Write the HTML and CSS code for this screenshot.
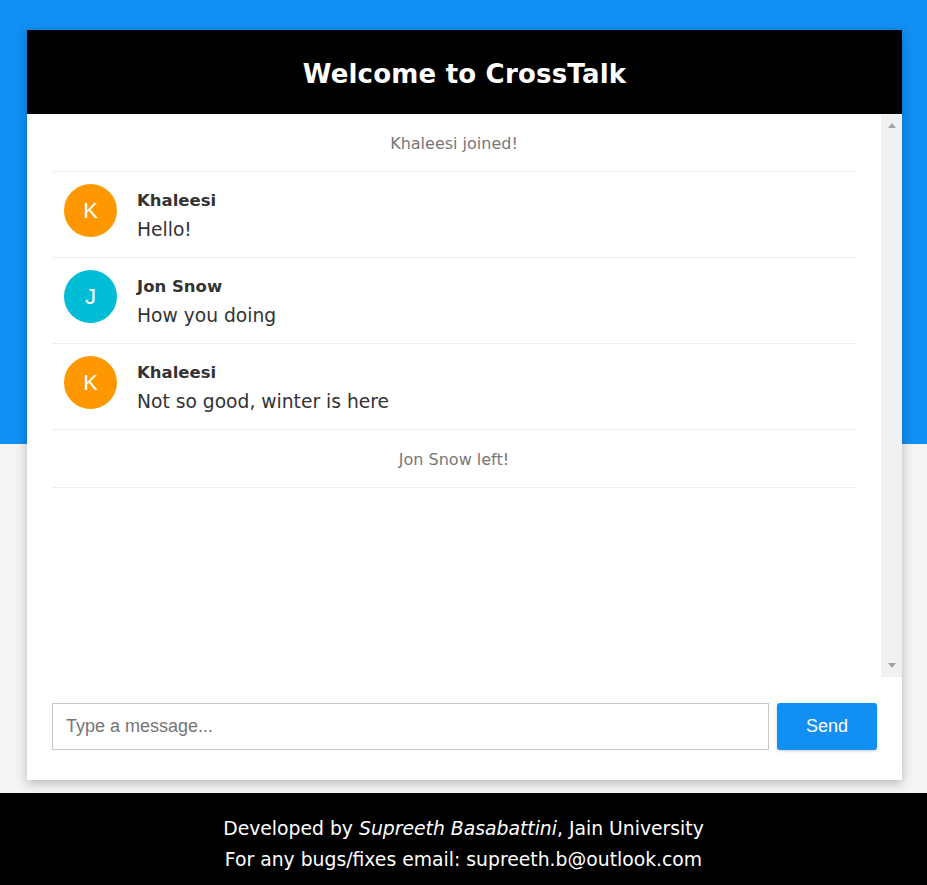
FILE: index.html
```html
<!DOCTYPE html>
<html>
<head>
<meta charset="utf-8">
<title>CrossTalk</title>
<link rel="stylesheet" href="styles.css">
</head>
<body>
<main class="card">
  <header class="card-header"><h1>Welcome to CrossTalk</h1></header>
  <div class="chat">
    <ul class="messages">
      <li class="system">Khaleesi joined!</li>
      <li class="msg">
        <span class="avatar orange">K</span>
        <div class="body"><div class="name">Khaleesi</div><div class="text">Hello!</div></div>
      </li>
      <li class="msg">
        <span class="avatar cyan">J</span>
        <div class="body"><div class="name">Jon Snow</div><div class="text">How you doing</div></div>
      </li>
      <li class="msg">
        <span class="avatar orange">K</span>
        <div class="body"><div class="name">Khaleesi</div><div class="text">Not so good, winter is here</div></div>
      </li>
      <li class="system">Jon Snow left!</li>
    </ul>
    <div class="scrollbar">
      <span class="arrow up"></span>
      <span class="arrow down"></span>
    </div>
  </div>
  <form class="composer">
    <input class="input" type="text" placeholder="Type a message...">
    <button class="send" type="button">Send</button>
  </form>
</main>
<footer class="footer">
  <p>Developed by <em>Supreeth Basabattini</em>, Jain University</p>
  <p>For any bugs/fixes email: supreeth.b@outlook.com</p>
</footer>
</body>
</html>
```
FILE: styles.css
```css
* { box-sizing: border-box; }
html, body { margin: 0; padding: 0; }
body {
  font-family: "Comic Sans MS", "DejaVu Sans", sans-serif;
  background: linear-gradient(#128ff2 0, #128ff2 444px, #f4f4f4 444px);
  min-height: 885px;
  display: flex;
  flex-direction: column;
}
.card {
  margin: 30px 25px 0 27px;
  width: 875px;
  background: #fff;
  box-shadow: 0 3px 10px rgba(0,0,0,0.25);
  display: flex;
  flex-direction: column;
}
.card-header {
  background: #000;
  height: 84px;
  padding-top: 3px;
  display: flex;
  align-items: center;
  justify-content: center;
}
.card-header h1 {
  margin: 0;
  color: #fff;
  font-size: 26px;
  font-weight: bold;
  letter-spacing: 0.2px;
}
.chat {
  height: 563px;
  display: flex;
}
.messages {
  flex: 1;
  list-style: none;
  margin: 0;
  padding: 0 25px;
}
.system {
  height: 58px;
  display: flex;
  align-items: center;
  justify-content: center;
  color: #777;
  font-size: 16px;
  border-bottom: 1px solid #eee;
  padding-top: 2px;
}
.msg {
  height: 86px;
  display: flex;
  align-items: flex-start;
  padding: 12px 0 0 12px;
  border-bottom: 1px solid #eee;
}
.avatar {
  width: 53px;
  height: 53px;
  border-radius: 50%;
  color: #fff;
  display: flex;
  align-items: center;
  justify-content: center;
  font-family: "Liberation Sans", Arial, sans-serif;
  font-size: 22px;
  flex: none;
}
.orange { background: #ff9800; }
.cyan { background: #00bcd4; }
.body { margin-left: 20px; padding-top: 3px; color: #333; }
.name { font-weight: bold; font-size: 16.5px; line-height: 28px; }
.text { font-size: 18.7px; line-height: 30px; }
.scrollbar {
  width: 21px;
  background: #f1f1f1;
  display: flex;
  flex-direction: column;
  justify-content: space-between;
  align-items: center;
  padding: 9px 0 9px;
}
.arrow {
  width: 0;
  height: 0;
  border-left: 4px solid transparent;
  border-right: 4px solid transparent;
}
.arrow.up { border-bottom: 5px solid #a3a3a3; }
.arrow.down { border-top: 5px solid #a3a3a3; }
.composer {
  margin: 0;
  display: flex;
  gap: 8px;
  padding: 26px 25px 30px 25px;
}
.input {
  flex: 1;
  height: 47px;
  border: 1px solid #c7c7c7;
  padding: 0 13px;
  font-family: "Liberation Sans", Arial, sans-serif;
  font-size: 18px;
  color: #333;
  outline: none;
}
.input::placeholder { color: #757575; }
.send {
  width: 100px;
  height: 47px;
  border: none;
  border-radius: 3px;
  background: #128ff2;
  color: #fff;
  font-family: "Liberation Sans", Arial, sans-serif;
  font-size: 18px;
  box-shadow: 0 1px 3px rgba(0,0,0,0.2);
}
.footer {
  margin-top: 13px;
  background: #000;
  color: #fff;
  text-align: center;
  font-size: 18.8px;
  padding: 20px 0 10px;
  height: 92px;
}
.footer p { margin: 0; line-height: 31px; }
.footer em { font-style: italic; }
```
